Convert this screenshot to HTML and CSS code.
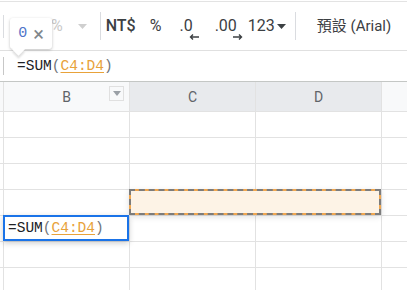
FILE: index.html
```
<!DOCTYPE html>
<html>
<head>
    <meta charset="utf-8">
    <title>Sheet</title>
    <link rel="stylesheet" href="styles.css">
</head>
<body>
    <!-- toolbar -->
    <div class="toolbar">
        <span class="sep"></span>
        <span class="tb faded pct-faded">%</span>
        <span class="tb faded caret-faded"><svg width="9" height="5" viewBox="0 0 9 5"><path d="M0 0h9L4.5 5z" fill="#cfcfcf"/></svg></span>
        <span class="sep sep-main"></span>
        <span class="tb nt">NT$</span>
        <span class="tb pct">%</span>
        <span class="tb dec">.0<svg class="arr" width="10" height="6" viewBox="0 0 10 6"><path d="M10 3H2M4 0.5L1.5 3 4 5.5" stroke="#3c4043" stroke-width="1.4" fill="none"/></svg></span>
        <span class="tb dec dec2">.00<svg class="arr" width="10" height="6" viewBox="0 0 10 6"><path d="M0 3H8M6 0.5L8.5 3 6 5.5" stroke="#3c4043" stroke-width="1.4" fill="none"/></svg></span>
        <span class="tb num">123<svg class="caret" width="9" height="5" viewBox="0 0 9 5"><path d="M0 0h9L4.5 5z" fill="#3c4043"/></svg></span>
        <span class="sep sep-font"></span>
        <span class="tb font">預設 (Arial)</span>
    </div>

    <!-- tooltip -->
    <div class="tip"><span class="tip-val">0</span><span class="tip-x">&times;</span></div>

    <!-- formula bar -->
    <div class="fbar">
        <span class="fsep"></span>
        <span class="formula">=SUM<span class="par">(</span><span class="ref">C4:D4</span><span class="par">)</span></span>
    </div>

    <!-- grid -->
    <div class="grid">
        <div class="hd corner"></div>
        <div class="hd colb">B<span class="filter"><svg width="8" height="5" viewBox="0 0 8 5"><path d="M0 0h8L4 5z" fill="#9aa0a6"/></svg></span></div>
        <div class="hd sel">C</div>
        <div class="hd sel">D</div>
        <div class="hd"></div>

        <div class="c"></div><div class="c"></div><div class="c"></div><div class="c"></div><div class="c"></div>
        <div class="c"></div><div class="c"></div><div class="c"></div><div class="c"></div><div class="c"></div>
        <div class="c"></div><div class="c"></div><div class="c"></div><div class="c"></div><div class="c"></div>

        <div class="c"></div><div class="c"></div><div class="c range"></div><div class="c"></div>

        <div class="c"></div><div class="c editor"><span class="formula">=SUM<span class="par">(</span><span class="ref">C4:D4</span><span class="par">)</span></span></div><div class="c"></div><div class="c"></div><div class="c"></div>

        <div class="c"></div><div class="c"></div><div class="c"></div><div class="c"></div><div class="c"></div>
        <div class="c"></div><div class="c"></div><div class="c"></div><div class="c"></div><div class="c"></div>
    </div>
</body>
</html>
```

FILE: styles.css
```
html {font-family: Roboto, "Noto Sans CJK TC", sans-serif; color: #3c4043;}
body {margin: 0; width: 407px; height: 290px; overflow: hidden; position: relative; background: #fff;}

.toolbar {display: flex; align-items: center; height: 48px; margin-top: 1px; border-top: 1px solid #e3e3e3; border-bottom: 1px solid #e0e0e0;}
.sep {width: 1px; height: 23px; background: #dadce0; margin-left: 3px;}
.tb {font-size: 16px; line-height: 20px; white-space: nowrap;}
.faded {color: #c9c9c9;}
.pct-faded {margin-left: 47px;}
.caret-faded {margin-left: 15px; display: flex;}
.sep-main {margin-left: 13px; height: 28px;}
.nt {margin-left: 5px; font-weight: 500;}
.pct {margin-left: 14px;}
.dec {margin-left: 18px; position: relative;}
.dec2 {margin-left: 22px;}
.arr {position: absolute; right: -6px; top: 18px;}
.num {margin-left: 11px; display: flex; align-items: center;}
.caret {margin-left: 2px;}
.sep-font {margin-left: 9px; height: 28px;}
.font {margin-left: 21px; font-size: 15px;}

.tip {position: absolute; left: 10px; top: 18px; width: 42px; height: 31px; background: #fff; border-radius: 3px;
      box-shadow: 0 1px 3px rgba(0,0,0,0.25); display: flex; align-items: center; justify-content: center; gap: 6px;}
.tip:after {content: ""; position: absolute; left: 4px; bottom: -5px; width: 9px; height: 9px; background: #fff;
      transform: rotate(45deg); box-shadow: 2px 2px 2px rgba(0,0,0,0.12);}
.tip-val {font-family: "Liberation Mono", monospace; font-size: 15px; color: #4f74c9;}
.tip-x {font-size: 20px; color: #80868b; line-height: 16px;}

.fbar {display: flex; align-items: center; height: 30px;}
.fsep {width: 1px; height: 18px; background: #c7c7c7; margin-left: 3px;}
.formula {font-family: "Liberation Mono", "DejaVu Sans Mono", monospace; font-size: 14.5px; color: #202124;}
.fbar .formula {margin-left: 13px;}
.par {color: #70757a;}
.ref {color: #e8a23a; text-decoration: underline; text-underline-offset: 2px;}

.grid {display: grid; grid-template-columns: 3px 125px 125px 125px 1fr; grid-template-rows: 29px repeat(7, 25px);
       row-gap: 1px; column-gap: 1px; background: #e2e2e2; border-top: 1px solid #c4c7c5;}
.hd {background: #f8f9fa; font-size: 14px; color: #5f6368; display: flex; align-items: center; justify-content: center; position: relative;}
.hd.sel {background: #e8eaed;}
.filter {position: absolute; right: 5px; top: 4px; width: 13px; height: 13px; border: 1px solid #e0e0e0; display: flex; align-items: center; justify-content: center;}
.c {background: #fff;}
.range {grid-column: span 2; margin: -1px 0 0 -1px; border: 2px dashed #7c7c7c;
        background: linear-gradient(#fdf3e6, #fdf3e6) padding-box, #f0a64f border-box; box-shadow: 0 2px 6px rgba(0,0,0,0.12); z-index: 1;}
.editor {margin: -1px 0 0 -1px; border: 2px solid #1a73e8; display: flex; align-items: center; box-shadow: 0 2px 6px rgba(0,0,0,0.2); z-index: 1;}
.editor .formula {margin-left: 3px;}
```
